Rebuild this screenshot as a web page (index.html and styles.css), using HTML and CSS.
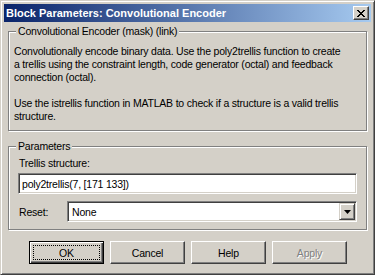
FILE: index.html
```html
<!DOCTYPE html>
<html>
<head>
    <title>Block Parameters: Convolutional Encoder</title>
    <link rel="stylesheet" href="styles.css">
</head>
<body>
    <div class="window">
        <div class="titlebar">
            <span class="title">Block Parameters: Convolutional Encoder</span>
            <button class="close" aria-label="Close">
                <svg width="8" height="7" viewBox="0 0 8 7">
                    <path d="M0 0h2v1h-2zM6 0h2v1h-2zM1 1h2v1h-2zM5 1h2v1h-2zM2 2h4v1h-4zM3 3h2v1h-2zM2 4h4v1h-4zM1 5h2v1h-2zM5 5h2v1h-2zM0 6h2v1h-2zM6 6h2v1h-2z" fill="#000"/>
                </svg>
            </button>
        </div>

        <div class="group group-desc">
            <span class="legend">Convolutional Encoder (mask) (link)</span>
            <p>Convolutionally encode binary data. Use the poly2trellis function to create<br>a trellis using the constraint length, code generator (octal) and feedback<br>connection (octal).</p>
            <p>Use the istrellis function in MATLAB to check if a structure is a valid trellis<br>structure.</p>
        </div>

        <div class="group group-params">
            <span class="legend">Parameters</span>
            <label class="field-label" for="trellis">Trellis structure:</label>
            <input class="field" type="text" id="trellis" value="poly2trellis(7, [171 133])">
            <div class="row">
                <label class="row-label" for="reset">Reset:</label>
                <div class="select" id="reset">
                    <span class="select-value">None</span>
                    <span class="select-btn">
                        <svg width="7" height="4" viewBox="0 0 7 4"><path d="M0 0h7l-3.5 4z" fill="#000"/></svg>
                    </span>
                </div>
            </div>
        </div>

        <div class="buttons">
            <button class="btn btn-default"><span class="focus">OK</span></button>
            <button class="btn">Cancel</button>
            <button class="btn">Help</button>
            <button class="btn btn-disabled">Apply</button>
        </div>
    </div>
</body>
</html>
```

FILE: styles.css
```css
body {
    margin: 0;
    padding: 0;
    background-color: #d4d0c8;
    font-family: "Liberation Sans", Arial, sans-serif;
    font-size: 10.5px;
    letter-spacing: -0.2px;
    color: #000;
}

.window {
    box-sizing: border-box;
    width: 375px;
    height: 275px;
    padding: 3px;
    background-color: #d4d0c8;
    border: 1px solid;
    border-color: #d4d0c8 #404040 #404040 #d4d0c8;
    box-shadow: inset 1px 1px #fff, inset -1px -1px #808080;
}

.titlebar {
    height: 18px;
    display: flex;
    align-items: center;
    justify-content: space-between;
    padding: 0 2px 0 2px;
    background: linear-gradient(to right, #0a246a, #a6caf0);
}

.title {
    color: #fff;
    font-weight: bold;
    font-size: 11px;
    letter-spacing: 0;
}

.close {
    box-sizing: border-box;
    width: 16px;
    height: 14px;
    padding: 0;
    margin: 0;
    display: flex;
    align-items: center;
    justify-content: center;
    background-color: #d4d0c8;
    border: 1px solid;
    border-color: #fff #404040 #404040 #fff;
    box-shadow: inset -1px -1px #808080;
}

.group {
    position: relative;
    box-sizing: border-box;
    width: 359px;
    margin-left: 4px;
    border: 1px solid #808080;
    box-shadow: inset 1px 1px #fff, 1px 1px #fff;
}

.legend {
    position: absolute;
    top: -7px;
    left: 7px;
    padding: 0 2px;
    line-height: 13px;
    background-color: #d4d0c8;
}

.group-desc {
    height: 100px;
    margin-top: 9px;
    padding: 13px 5px 0 5px;
    white-space: nowrap;
}

.group-desc p {
    margin: 0 0 13px 0;
    line-height: 13px;
}

.group-params {
    height: 84px;
    margin-top: 15px;
    padding: 10px 9px 0 9px;
}

.field-label {
    display: block;
    line-height: 13px;
    padding-left: 1px;
    margin-bottom: 3px;
}

.field,
.select {
    box-sizing: border-box;
    height: 21px;
    background-color: #fff;
    border: 1px solid;
    border-color: #808080 #fff #fff #808080;
    box-shadow: inset 1px 1px #404040, inset -1px -1px #d4d0c8;
}

.field {
    display: block;
    width: 339px;
    margin: 0;
    padding: 0 3px;
    font-family: inherit;
    font-size: inherit;
    letter-spacing: inherit;
    color: #000;
    outline: none;
}

.row {
    display: flex;
    align-items: center;
    margin-top: 7px;
}

.row-label {
    width: 48px;
    padding-left: 1px;
}

.select {
    flex: 1;
    display: flex;
    align-items: center;
    justify-content: space-between;
    padding: 1px 1px 1px 4px;
}

.select-btn {
    box-sizing: border-box;
    width: 16px;
    height: 17px;
    display: flex;
    align-items: center;
    justify-content: center;
    background-color: #d4d0c8;
    border: 1px solid;
    border-color: #d4d0c8 #404040 #404040 #d4d0c8;
    box-shadow: inset 1px 1px #fff, inset -1px -1px #808080;
}

.buttons {
    display: flex;
    gap: 6px;
    margin-top: 11px;
    padding-left: 25px;
}

.btn {
    box-sizing: border-box;
    width: 75px;
    height: 23px;
    margin: 0;
    padding: 0;
    font-family: inherit;
    font-size: inherit;
    letter-spacing: inherit;
    color: #000;
    background-color: #d4d0c8;
    border: 1px solid;
    border-color: #fff #404040 #404040 #fff;
    box-shadow: inset -1px -1px #808080;
}

.btn-default {
    display: flex;
    padding: 3px;
    border: 1px solid #000;
    box-shadow: inset 1px 1px #fff, inset -1px -1px #404040, inset -2px -2px #808080;
}

.focus {
    flex: 1;
    display: flex;
    align-items: center;
    justify-content: center;
    border: 1px dotted #000;
}

.btn-disabled {
    color: #808080;
    text-shadow: 1px 1px #fff;
}
```
